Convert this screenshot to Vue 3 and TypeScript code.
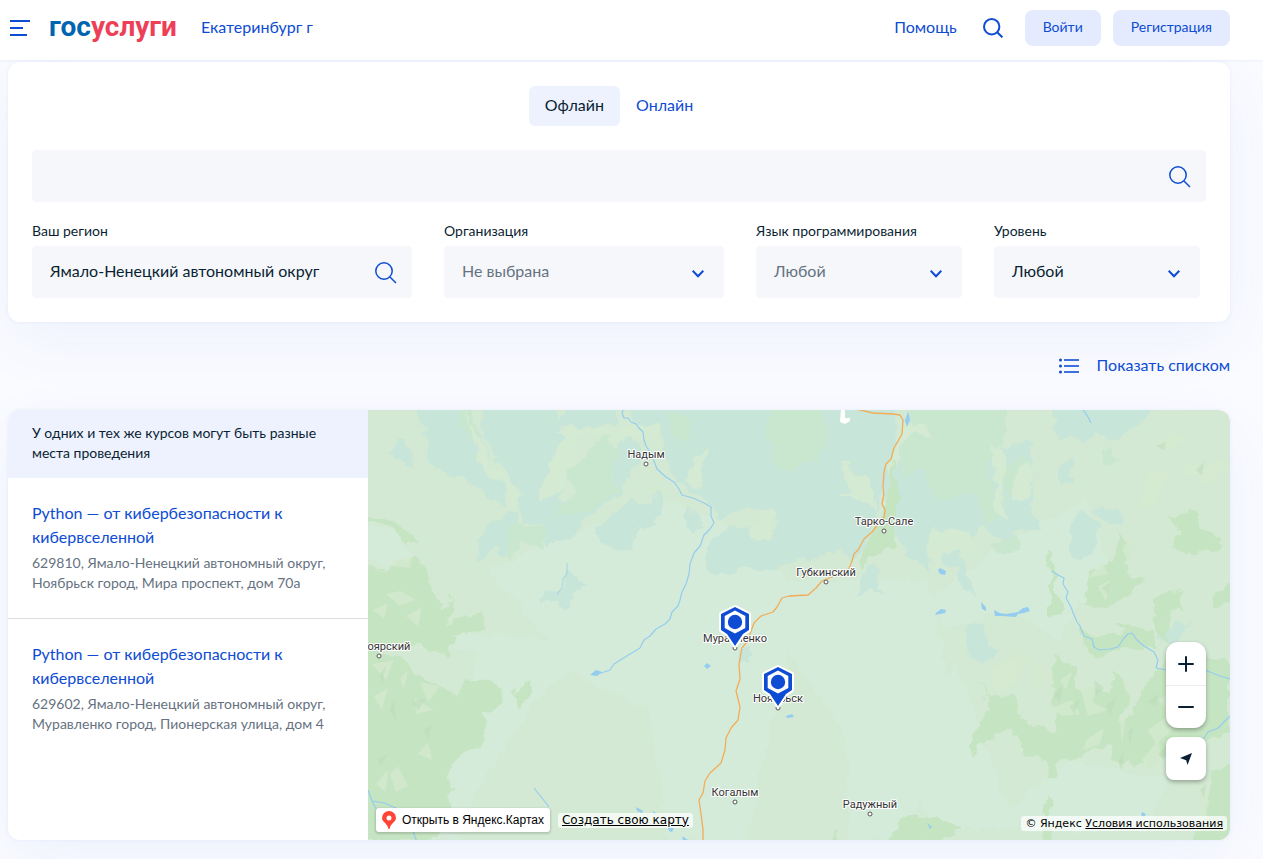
<script setup lang="ts">
import { ref } from 'vue'

interface Course {
  title: string
  address: string
}

interface City {
  name: string
  x: number
  y: number
  labelX?: number
}

interface Pin {
  x: number
  y: number
}

const mode = ref<'offline' | 'online'>('offline')
const query = ref('')
const region = ref('Ямало-Ненецкий автономный округ')
const organization = ref('')
const language = ref('')
const level = ref('any')

const courses: Course[] = [
  {
    title: 'Python — от кибербезопасности к кибервселенной',
    address: '629810, Ямало-Ненецкий автономный округ, Ноябрьск город, Мира проспект, дом 70а',
  },
  {
    title: 'Python — от кибербезопасности к кибервселенной',
    address: '629602, Ямало-Ненецкий автономный округ, Муравленко город, Пионерская улица, дом 4',
  },
]

const cities: City[] = [
  { name: 'Надым', x: 278, y: 53 },
  { name: 'Тарко-Сале', x: 516, y: 120 },
  { name: 'Губкинский', x: 458, y: 171 },
  { name: 'оярский', x: 11, y: 245, labelX: 21 },
  { name: 'Муравленко', x: 367, y: 237 },
  { name: 'Ноябрьск', x: 410, y: 297 },
  { name: 'Когалым', x: 367, y: 391 },
  { name: 'Радужный', x: 502, y: 403 },
]

const pins: Pin[] = [
  { x: 367, y: 212 },
  { x: 410, y: 272 },
]
</script>

<template>
  <div class="page">
    <header class="header">
      <button class="icon-button menu" type="button" aria-label="Меню">
        <svg width="20" height="16" viewBox="0 0 20 16" fill="#0d4cd3">
          <rect width="20" height="2" />
          <rect y="7" width="13" height="2" />
          <rect y="14" width="17" height="2" />
        </svg>
      </button>
      <a class="logo" href="#"><span class="logo-blue">гос</span><span class="logo-red">услуг<span lang="bg">и</span></span></a>
      <a class="link" href="#">Екатеринбург г</a>
      <nav class="header-right">
        <a class="link" href="#">Помощь</a>
        <button class="icon-button search-button" type="button" aria-label="Поиск">
          <svg width="20" height="20" viewBox="0 0 20 20" fill="none" stroke="#0d4cd3" stroke-width="2">
            <circle cx="8.7" cy="8.7" r="7.7" />
            <path d="M14.2 14.2L19.4 19.4" />
          </svg>
        </button>
        <button class="soft-button" type="button">Войти</button>
        <button class="soft-button" type="button">Регистрация</button>
      </nav>
    </header>

    <main class="content">
      <form class="filters" @submit.prevent>
        <div class="tabs">
          <button type="button" class="tab" :class="{ active: mode === 'offline' }" @click="mode = 'offline'">Офлайн</button>
          <button type="button" class="tab" :class="{ active: mode === 'online' }" @click="mode = 'online'">Онлайн</button>
        </div>
        <div class="field">
          <input v-model="query" class="control" type="text" aria-label="Поиск курсов" />
          <svg class="field-search" width="22" height="22" viewBox="0 0 22 22" fill="none" stroke="#0d4cd3" stroke-width="1.5">
            <circle cx="9" cy="9" r="8.2" />
            <path d="M15 15L21 21" />
          </svg>
        </div>
        <div class="columns">
          <div>
            <label class="label" for="region">Ваш регион</label>
            <div class="field">
              <input id="region" v-model="region" class="control" type="text" />
              <svg class="field-search" width="22" height="22" viewBox="0 0 22 22" fill="none" stroke="#0d4cd3" stroke-width="1.5">
                <circle cx="9" cy="9" r="8.2" />
                <path d="M15 15L21 21" />
              </svg>
            </div>
          </div>
          <div>
            <label class="label" for="organization">Организация</label>
            <div class="field">
              <select id="organization" v-model="organization" class="control muted">
                <option value="">Не выбрана</option>
              </select>
              <svg class="chevron" width="12" height="8" viewBox="0 0 12 8" fill="none" stroke="#0d4cd3" stroke-width="2"><path d="M.7 .8L6 6.2L11.300 .8" /></svg>
            </div>
          </div>
          <div>
            <label class="label" for="language">Язык программирования</label>
            <div class="field">
              <select id="language" v-model="language" class="control muted">
                <option value="">Любой</option>
              </select>
              <svg class="chevron" width="12" height="8" viewBox="0 0 12 8" fill="none" stroke="#0d4cd3" stroke-width="2"><path d="M.7 .8L6 6.2L11.300 .8" /></svg>
            </div>
          </div>
          <div>
            <label class="label" for="level">Уровень</label>
            <div class="field">
              <select id="level" v-model="level" class="control">
                <option value="any">Любой</option>
              </select>
              <svg class="chevron" width="12" height="8" viewBox="0 0 12 8" fill="none" stroke="#0d4cd3" stroke-width="2"><path d="M.7 .8L6 6.2L11.300 .8" /></svg>
            </div>
          </div>
        </div>
      </form>

      <div class="view-row">
        <button class="view-toggle" type="button">
          <svg width="20" height="16" viewBox="0 0 20 16" fill="#0d4cd3">
            <circle cx="1.500" cy="2" r="1.500" /><rect x="5" y="1" width="15" height="2" fill="#3d70dc" />
            <circle cx="1.500" cy="8" r="1.500" /><rect x="5" y="7" width="15" height="2" fill="#3d70dc" />
            <circle cx="1.500" cy="14" r="1.500" /><rect x="5" y="13" width="15" height="2" fill="#3d70dc" />
          </svg>
          <span>Показать списком</span>
        </button>
      </div>

      <section class="results">
        <div class="list">
          <p class="notice">У одних и тех же курсов могут быть разные места проведения</p>
          <article v-for="course in courses" :key="course.address" class="course">
            <a class="course-title" href="#">{{ course.title }}</a>
            <p class="course-address">{{ course.address }}</p>
          </article>
        </div>

        <div class="map">
          <svg class="map-canvas" viewBox="0 0 862 430" preserveAspectRatio="xMidYMid slice" role="img" aria-label="Карта мест проведения">
            <defs>
              <filter id="rough" x="0" y="0" width="862" height="430" filterUnits="userSpaceOnUse" color-interpolation-filters="sRGB">
                <feTurbulence type="fractalNoise" baseFrequency="0.07" numOctaves="3" seed="4" result="noise" />
                <feDisplacementMap in="SourceGraphic" in2="noise" scale="14" xChannelSelector="R" yChannelSelector="G" />
              </filter>
            </defs>
            <rect width="862" height="430" fill="#d3e9d3" />

            <g filter="url(#rough)">
              <!-- pale lowlands -->
              <g fill="#d5ebd9">
                <path d="M120 160L210 120L300 90L350 110L420 170L560 170L580 280L540 430L480 430L480 330L420 240L380 430L300 430L280 300L200 260L160 300L110 380L90 430L50 430L90 330L110 240L50 240L80 220L180 230Z" />
                <path d="M0 115L30 125L50 150L25 160L0 150Z" />
                <path d="M640 130L720 90L740 150L690 230L640 200L580 220L560 190Z" />
                <path d="M540 330L590 250L640 400L700 350L800 370L780 420L560 420Z" />
              </g>
              <!-- wetlands -->
              <g fill="#c8e5d9">
                <path d="M50 -10L100 -10L112 25L122 52L136 78L140 94L118 86L108 78L90 66L72 62L62 45Z" />
                <path d="M30 28L42 38L45 58L28 52L20 42Z" />
                <path d="M118 -10L186 -10L190 16L208 24L200 44L186 56L182 66L195 76L190 90L172 92L150 80L138 65L122 42L112 12Z" />
                <path d="M150 84L200 90L240 70L250 30L262 24L278 45L262 62L256 80L232 98L215 110L205 128L180 138L172 114L154 114L148 100Z" />
                <path d="M202 -10L250 -10L246 14L214 18L186 14Z" />
                <path d="M262 -10L480 -10L480 70L465 110L436 148L400 160L370 158L350 168L338 160L340 136L360 116L388 118L412 118L410 108L392 96L350 108L335 88L305 70L296 40L270 20Z" />
                <path d="M128 110L146 100L148 125L138 145L124 140L112 150L108 128L118 122Z" />
                <path d="M228 118L260 92L276 94L290 80L296 95L286 116L270 118L265 140L248 142L234 134Z" />
                <path d="M318 96L330 102L336 118L325 126L318 112Z" />
                <path d="M176 180L196 176L200 160L210 168L218 178L204 184L198 202L186 190L170 196Z" />
                <path d="M432 -10L530 -10L525 60L512 90L505 120L485 150L470 140L440 150L420 140Z" />
                <path d="M525 40L548 -10L640 -10L630 40L665 30L662 80L672 120L650 118L640 135L615 115L600 130L580 140L568 116L560 160L540 145L525 120L515 90Z" />
                <path d="M682 -10L790 -10L775 12L754 24L742 30L730 22L715 35L705 24L690 30Z" />
                <path d="M690 56L706 46L705 72L690 76Z" />
                <path d="M704 108L716 98L730 112L728 140L712 152L702 140Z" />
                <path d="M724 98L748 100L755 116L738 114Z" />
                <path d="M566 138L592 142L600 166L608 190L596 180L588 160L574 154Z" />
                <path d="M500 154L512 158L510 176L518 186L502 178L490 188L492 164Z" />
                <path d="M600 216L616 214L620 236L632 240L624 248L612 254L600 246L598 232Z" />
                <path d="M370 238L382 236L382 254L374 254Z" />
                <path d="M790 230L806 214L822 212L818 222L800 234Z" />
              </g>
              <!-- mixed woodland -->
              <g fill="#c9e6cf">
                <path d="M200 60L236 25L252 40L240 66L255 78L225 98L200 108L188 98L204 86Z" />
                <path d="M402 -10L452 -10L462 28L448 50L415 62L398 30Z" />
                <path d="M548 -10L640 -10L634 35L620 50L626 98L640 86L632 65L655 45L665 62L650 75L620 115L606 82L570 90L555 60L535 70L532 30Z" />
                <path d="M90 -10L106 6L114 25L102 30L92 15Z" />
                <path d="M300 0L322 10L320 32L306 28Z" />
                <path d="M730 45L742 38L752 48L736 56Z" />
                <path d="M620 135L650 125L655 140L635 146Z" />
                <path d="M142 115L175 115L178 140L155 132L140 148Z" />
              </g>
              <!-- dry valleys -->
              <g fill="#d4ead2">
                <path d="M94 -8L106 20L122 54L142 72L150 94L144 100L138 80L116 58L104 28Z" />
                <path d="M184 18L245 20L290 14L296 42L284 30L250 28L210 26L204 54L194 80L170 92L182 54L196 28Z" />
                <path d="M326 52L342 38L334 62L330 78L320 72Z" />
                <path d="M390 96L398 100L410 116L404 130L384 128L384 116L392 112Z" />
                <path d="M474 52L490 64L502 68L508 98L470 84L486 82L473 66Z" />
                <path d="M623 30L634 45L640 60L632 78L640 110L625 100L628 60Z" />
                <path d="M644 70L655 50L664 60L658 90L646 94Z" />
                <path d="M534 12L556 15L562 28L545 20L532 38L526 70L518 60L530 25Z" />
                <path d="M564 120L600 120L610 140L596 142L578 140L570 160L560 142Z" />
              </g>
              <!-- forests -->
              <g fill="#c5e4c1">
                <path d="M-10 103L10 105L35 116L52 136L28 126L8 108L-10 112Z" />
                <path d="M-10 156L20 160L30 150L48 148L60 160L66 186L75 202L82 186L88 200L78 215L112 202L120 216L88 226L80 246L54 236L30 236L-10 240Z" />
                <path d="M-10 240L30 246L54 268L90 286L96 268L112 268L132 276L137 296L114 302L120 316L110 340L88 342L80 368L84 398L76 410L60 404L-10 380Z" />
                <path d="M144 282L154 276L160 268L164 288L150 300Z" />
                <path d="M88 416L60 430L-10 430L-10 380L60 402Z" />
                <path d="M527 48L530 90L526 110L526 138L505 146L492 158L492 140L514 110L522 70Z" />
                <path d="M680 137L686 146L688 180L696 200L682 206L682 175Z" />
                <path d="M721 162L744 150L750 120L760 140L758 165L778 168L764 184L740 198L714 196Z" />
                <path d="M800 104L826 100L836 122L854 126L850 140L826 144L806 140L812 124Z" />
                <path d="M786 188L812 180L815 200L802 202L798 232L786 216Z" />
                <path d="M710 216L726 228L756 222L748 214L785 218L790 238L750 240L722 248Z" />
                <path d="M845 190L862 170L862 194L848 200Z" />
                <path d="M608 265L616 286L648 284L650 310L688 322L684 256L686 246L706 256L708 280L742 282L746 262L760 278L754 312L765 300L780 272L800 250L862 250L862 320L820 338L780 358L762 350L752 356L740 334L706 350L695 348L690 356L682 370L676 350L654 342L644 320L612 334L602 350L606 320L624 300Z" />
                <path d="M524 418L540 408L568 408L592 416L576 432L520 434Z" />
                <path d="M678 382L684 396L682 434L676 434Z" />
                <path d="M845 360L866 355L866 434L825 434L838 400Z" />
                <path d="M458 434L470 420L466 434Z" />
              </g>
            </g>

            <!-- rocky relief -->
            <g fill="#d5ead0" opacity=".7">
              <path d="M22 156L30 149L44 147L42 158ZM18 184L32 181L48 190L32 196ZM4 200L20 193L16 208ZM38 206L54 197L50 216ZM4 254L26 250L18 270ZM32 268L40 260L36 278ZM6 286L20 278L14 300ZM52 272L72 276L60 292ZM46 288L66 300L48 304ZM50 344L60 332L64 350ZM22 364L30 356L40 376L28 382ZM8 374L20 360L18 382Z" />
              <path d="M620 262L640 250L662 246L650 270L630 286ZM645 240L660 244L652 256ZM664 260L676 252L686 270L670 278ZM692 270L704 262L698 280ZM712 278L730 274L724 292L740 300L720 306ZM684 298L704 290L712 304L694 306ZM718 330L736 318L732 334L716 340ZM752 310L758 300L754 336ZM780 320L800 306L806 318L788 334ZM774 350L790 330L794 350L780 362ZM790 290L810 278L800 300Z" />
              <path d="M776 76L782 62L802 62L792 80L786 94L770 98ZM786 34L806 22L818 30L800 40ZM812 56L826 52L838 60L820 68ZM830 64L850 50L862 54L846 70L832 74ZM720 168L734 152L740 164ZM730 176L742 170L738 192ZM754 140L764 124L760 150ZM822 380L840 374L836 392ZM826 398L842 390L836 410Z" />
            </g>
            <g fill="#bcdab8" opacity=".5">
              <path d="M12 264L18 256L14 274ZM44 292L58 288L50 300ZM22 300L26 290L28 312ZM10 350L20 344L12 356ZM56 320L64 314L60 330ZM686 286L694 276L692 292ZM702 296L712 290L706 304ZM726 270L736 278L728 286ZM738 296L748 288L742 306ZM780 292L790 284L788 296ZM760 322L766 316L762 334ZM790 344L798 336L796 350ZM788 36L798 32L796 40ZM828 60L836 52L834 66ZM734 178L742 172L740 184ZM832 380L838 374L836 388ZM750 352L756 340L754 360Z" />
            </g>

            <!-- water -->
            <g fill="none" stroke="#94cdf0" stroke-width="1.200" stroke-linejoin="round">
              <path d="M256 -2L254 3L256 8L260 8L263 12L268 14L271 18L275 22L276 30L278 36L282 42L286 51L289 59L298 67L306 72L311 79L314 85L325 88L336 93L343 97L343 106L346 113L342 119L336 125L332 136L326 143L322 154L321 164L318 174L314 182L312 190L310 196L304 202L302 209L297 214L288 219L282 226L276 230L272 238L262 244L254 249L246 254L242 260L233 263L226 265" />
              <path d="M199 153V164L195 169L194 178L189 184" opacity=".6" />
              <path d="M684 161L690 165L696 168L695 174L700 182L698 188L703 197L706 205L709 212L712 216L716 226L724 229L726 237L731 240L742 239L750 237L756 228L760 224L764 223L769 230L776 236L786 242L790 250L788 258L798 260L808 258L820 256L832 258L842 262L852 266L862 269" />
              <path d="M862 306L856 312L850 318L840 322L836 328L830 330" />
              <path d="M0 380L4 391L16 393L28 398L40 408L46 424L49 432M4 391L12 406M166 378L174 388L181 397M714 -2L720 7L723 13" />
            </g>
            <g fill="#94cdf0">
              <path d="M222 265L228 260L234 262L229 266ZM336 256L339 253L343 256L339 259ZM418 306L424 304L426 307L419 308ZM570 160L572 158L578 161L577 165L572 164ZM568 203L573 199L578 200L577 203L567 205ZM613 192L618 197L618 201L614 199ZM626 200L632 203L638 204L644 203L650 202L655 198L660 197L662 201L656 203L650 204L648 207L634 206L627 206ZM559 413L564 417L562 419ZM268 397L275 401L274 403L269 401ZM284 400L289 404L286 404ZM300 418L306 418L304 422L301 421ZM314 426L320 430H315ZM774 402L778 404L776 407L773 405ZM540 1L542 10L539 17L537 11Z" />
            </g>
            <path d="M473 -1H477V8H482V11L477 14L472 12Z" fill="#fff" />

            <!-- road -->
            <path d="M488 -1L505 3L525 4L532 5L535 10L534 24L530 31L526 38L523 49L518 54L516 62L515 77L516 84L514 94L517 100L516 108L510 114L504 122L496 129L490 140L486 144L483 154L480 160L472 161L466 166L454 171L448 178L440 185L421 186L414 188L409 197L405 202L393 206L386 213L382 224L379 232L374 238L371 254L372 269L368 281L372 297L370 310L363 318L358 328L357 340L353 353L342 363L337 371L335 383L331 390L333 404L335 419L335 432" fill="none" stroke="#f1ad58" stroke-width="1.300" stroke-linejoin="round" />

            <g class="city-labels">
              <g v-for="city in cities" :key="city.name">
                <text :x="city.labelX ?? city.x" :y="city.y - 5" text-anchor="middle">{{ city.name }}</text>
                <circle :cx="city.x" :cy="city.y + 1" r="2" fill="#fff" stroke="#555" />
              </g>
            </g>

            <g v-for="pin in pins" :key="pin.x" :transform="`translate(${pin.x} ${pin.y})`">
              <path d="M0 -15L14 -8V8L8 12L0 24L-8 12L-14 8V-8Z" fill="#0d4cd3" stroke="#fff" stroke-width="4" stroke-linejoin="round" paint-order="stroke" />
              <path d="M0 -11.500L10.300 -6V6L0 11.500L-10.300 6V-6Z" fill="#fff" />
              <circle r="7.200" fill="#0d4cd3" />
            </g>
          </svg>

          <div class="map-controls">
            <div class="zoom">
              <button type="button" aria-label="Приблизить">
                <svg width="16" height="16" viewBox="0 0 16 16" stroke="#0b1f33" stroke-width="2" stroke-linecap="round"><path d="M1 8H15M8 1V15" /></svg>
              </button>
              <button type="button" aria-label="Отдалить">
                <svg width="16" height="16" viewBox="0 0 16 16" stroke="#0b1f33" stroke-width="2" stroke-linecap="round"><path d="M1 8H15" /></svg>
              </button>
            </div>
            <button class="locate" type="button" aria-label="Моё местоположение">
              <svg width="12" height="12" viewBox="0 0 12 12" fill="#0b1f33"><path d="M12 0L7.500 12L6.200 7.200L0 5Z" /></svg>
            </button>
          </div>

          <div class="map-links">
            <a class="open-map" href="#">
              <svg width="14" height="18" viewBox="0 0 14 18"><path d="M7 0A7 7 0 0 0 0 7C0 11 5.500 12.500 6.300 17.400Q7 18.400 7.700 17.400C8.500 12.500 14 11 14 7A7 7 0 0 0 7 0Z" fill="#f43" /><circle cx="7" cy="7" r="2.500" fill="#fff" /></svg>
              Открыть в Яндекс.Картах
            </a>
            <a class="create-map" href="#">Создать свою карту</a>
          </div>
          <p class="copyright">© Яндекс <a href="#">Условия использования</a></p>
        </div>
      </section>
    </main>
  </div>
</template>

<style>
body {
  margin: 0;
  background: #fafbff;
}
</style>

<style scoped>
.page {
  font-family: Lato, "Open Sans", sans-serif;
  font-size: 16px;
  line-height: 24px;
  color: #0b1f33;
}

.page * {
  box-sizing: border-box;
}

a {
  color: #0d4cd3;
  text-decoration: none;
}

p {
  margin: 0;
}

button,
input,
select {
  font: inherit;
  color: inherit;
  border: 0;
  margin: 0;
  cursor: pointer;
}

button {
  padding: 0;
  background: none;
}

svg {
  display: block;
}

.header {
  position: relative;
  z-index: 1;
  display: flex;
  align-items: center;
  height: 60px;
  padding: 0 33px 4px 10px;
  background: #fff;
  box-shadow: 0 1px 2px rgba(13, 76, 211, 0.06);
}

.link {
  padding-bottom: 2px;
}

.logo {
  margin: 0 24px 0 19px;
  padding-bottom: 2px;
  font-family: Roboto, sans-serif;
  font-weight: 700;
  font-size: 28px;
  line-height: 32px;
}

.logo-blue {
  color: #0065b1;
}

.logo-red {
  color: #ee3f58;
}

.header-right {
  display: flex;
  align-items: center;
  margin-left: auto;
}

.search-button {
  margin: 0 22px 0 26px;
}

.soft-button {
  height: 36px;
  padding: 0 18px 2px;
  border-radius: 8px;
  background: #e4ebfe;
  color: #0d4cd3;
  font-size: 14px;
  line-height: 20px;
}

.soft-button + .soft-button {
  margin-left: 12px;
}

.content {
  padding: 2px 33px 19px 8px;
}

.filters {
  padding: 24px;
  border-radius: 12px;
  background: #fff;
  box-shadow: 0 0 4px rgba(13, 76, 211, 0.06), 0 20px 64px rgba(13, 76, 211, 0.05);
}

.tabs {
  display: flex;
  justify-content: center;
  margin-bottom: 24px;
}

.tab {
  height: 40px;
  padding: 0 16px 2px;
  border-radius: 6px;
  color: #0d4cd3;
}

.tab.active {
  background: #edf2fe;
  color: #0b1f33;
}

.field {
  position: relative;
}

.control {
  display: block;
  width: 100%;
  height: 52px;
  padding: 0 52px 2px 18px;
  border-radius: 4px;
  background: #f5f7fb;
  appearance: none;
  outline: none;
}

input.control {
  padding-bottom: 4px;
}

.control.muted {
  color: #66727f;
}

.field-search {
  position: absolute;
  top: 16px;
  right: 15px;
}

.chevron {
  position: absolute;
  top: 24px;
  right: 20px;
  pointer-events: none;
}

.columns {
  display: grid;
  grid-template-columns: 380fr 280fr 206fr 206fr;
  gap: 32px;
  margin-top: 19px;
  padding-right: 6px;
}

.label {
  display: block;
  margin-bottom: 5px;
  font-size: 14px;
  line-height: 20px;
}

.view-row {
  display: flex;
  justify-content: flex-end;
  padding: 31px 0;
}

.view-toggle {
  display: flex;
  align-items: center;
  gap: 18px;
  color: #0d4cd3;
}

.view-toggle span {
  padding-bottom: 2px;
}

.results {
  display: flex;
  overflow: hidden;
  border-radius: 12px;
  background: #fff;
  box-shadow: 0 0 4px rgba(13, 76, 211, 0.06), 0 20px 64px rgba(13, 76, 211, 0.05);
}

.list {
  flex: 0 0 360px;
}

.notice {
  padding: 13px 24px 15px;
  background: #edf2fe;
  font-size: 14px;
  line-height: 20px;
}

.course {
  padding: 23px 24px 25px;
}

.course + .course {
  border-top: 1px solid #dbdfe4;
}

.course-title {
  display: block;
}

.course-address {
  margin-top: 4px;
  color: #66727f;
  font-size: 14px;
  line-height: 20px;
}

.map {
  position: relative;
  flex: 1;
  min-height: 430px;
}

.map-canvas {
  position: absolute;
  inset: 0;
  width: 100%;
  height: 100%;
}

.city-labels text {
  fill: #333;
  stroke: #fff;
  stroke-width: 2px;
  stroke-linejoin: round;
  paint-order: stroke;
  font-family: Roboto, sans-serif;
  font-size: 11px;
}

.map-controls {
  position: absolute;
  right: 24px;
  bottom: 60px;
  display: grid;
  gap: 9px;
}

.zoom,
.locate {
  width: 40px;
  border-radius: 12px;
  background: #fff;
  box-shadow: 0 2px 4px rgba(0, 0, 0, 0.3);
}

.zoom button,
.locate {
  display: flex;
  align-items: center;
  justify-content: center;
  width: 40px;
  height: 43px;
}

.locate {
  border-radius: 8px;
}

.zoom button + button {
  border-top: 1px solid #ececec;
}

.map-links {
  position: absolute;
  left: 8px;
  bottom: 8px;
  display: flex;
  align-items: center;
  gap: 8px;
}

.open-map {
  display: flex;
  align-items: center;
  gap: 6px;
  height: 24px;
  padding: 0 6px;
  border-radius: 3px;
  background: #fff;
  box-shadow: 0 1px 2px 1px rgba(0, 0, 0, 0.15);
  color: #000;
  font-family: "Liberation Sans", sans-serif;
  font-size: 12px;
}

.create-map,
.copyright {
  padding: 0 4px;
  border-radius: 3px;
  background: rgba(255, 255, 255, 0.7);
  color: #000;
  font-family: "DejaVu Sans", sans-serif;
  font-size: 11px;
  line-height: 15px;
}

.create-map {
  font-size: 12px;
}

.create-map,
.copyright a {
  color: #000;
  text-decoration: underline;
}

.copyright {
  position: absolute;
  right: 3px;
  bottom: 9px;
}
</style>
